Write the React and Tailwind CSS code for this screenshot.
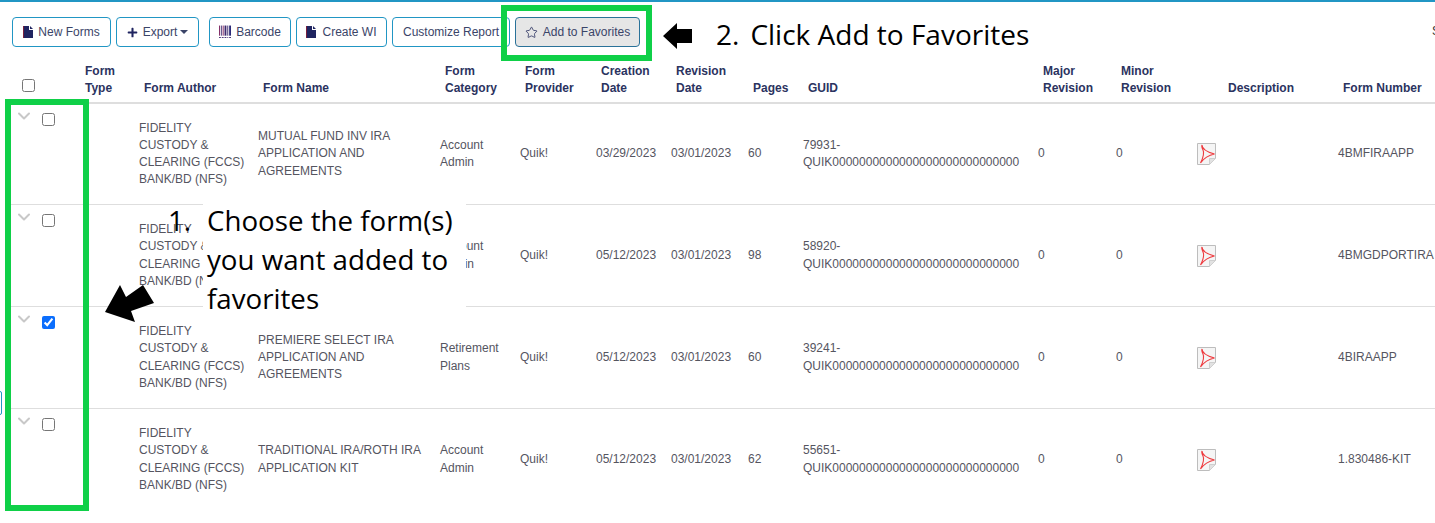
import React from "react";
import { FaPlus } from "react-icons/fa";
import { ChevronDown, Star } from "lucide-react";

const columns =
  "grid-cols-[67px_59px_119px_182px_80px_76px_75px_77px_55px_235px_79px_80px_141px_200px]";

const rows = [
  {
    name: ["MUTUAL FUND INV IRA", "APPLICATION AND", "AGREEMENTS"],
    category: ["Account", "Admin"],
    created: "03/29/2023",
    pages: "60",
    guid: "79931-",
    number: "4BMFIRAAPP",
  },
  {
    name: ["MUTUAL FUND GOLD", "PORTFOLIO IRA", "APPLICATION"],
    category: ["Account", "Admin"],
    created: "05/12/2023",
    pages: "98",
    guid: "58920-",
    number: "4BMGDPORTIRA",
  },
  {
    name: ["PREMIERE SELECT IRA", "APPLICATION AND", "AGREEMENTS"],
    category: ["Retirement", "Plans"],
    created: "05/12/2023",
    pages: "60",
    guid: "39241-",
    number: "4BIRAAPP",
    checked: true,
  },
  {
    name: ["TRADITIONAL IRA/ROTH IRA", "APPLICATION KIT"],
    category: ["Account", "Admin"],
    created: "05/12/2023",
    pages: "62",
    guid: "55651-",
    number: "1.830486-KIT",
  },
];

const FileIcon = () => (
  <svg viewBox="0 0 10 12" className="w-[10px] h-[12px] shrink-0">
    <path d="M0 0H6V4H10V12H0Z" fill="#1f2460" />
    <path d="M7 0L10 3H7Z" fill="#1f2460" />
    <rect x="0" y="0" width="1" height="12" fill="#7a1f3d" />
  </svg>
);

const BarcodeIcon = () => (
  <svg viewBox="0 0 13 14" className="w-[12px] h-[14px] shrink-0" fill="#3d2a6e">
    <rect x="0" y="0" width="1" height="11" fill="#7a1f5d" />
    <rect x="2" y="0" width="1" height="11" />
    <rect x="4" y="0" width="1" height="11" fill="#7a1f5d" />
    <rect x="6" y="0" width="2" height="11" />
    <rect x="9" y="0" width="1" height="11" />
    <rect x="11" y="0" width="2" height="11" fill="#2b2a78" />
    <rect x="0" y="12.500" width="2" height="1" />
    <rect x="3" y="12.500" width="2" height="1" />
    <rect x="6" y="12.500" width="2" height="1" />
    <rect x="9" y="12.500" width="1" height="1" />
    <rect x="11" y="12.500" width="2" height="1" />
  </svg>
);

const PdfIcon = () => (
  <svg viewBox="0 0 19 22" className="w-[19px] h-[22px]">
    <path d="M.5.5H18.5V15.5L12.5 21.500H.5Z" fill="#f5f5f5" stroke="#bdbdbd" />
    <path d="M18.5 15.500H12.5V21.500Z" fill="#e2e2e2" stroke="#cfcfcf" />
    <path
      d="M5 2C5 6 10 9 17.500 11C12 12 7 15 3.500 20C5.500 16 8 11 6 7C5 5 4.500 3 5 2Z"
      fill="none"
      stroke="#ee3a3e"
      strokeWidth="1.100"
    />
  </svg>
);

const Button = ({ children, active, className = "" }) => (
  <button
    className={`h-[30px] flex items-center justify-center gap-[5px] rounded border text-xs text-[#3a4468] ${
      active ? "bg-[#e6e6e6] border-[#2a7299]" : "bg-white border-[#2196c4]"
    } ${className}`}
  >
    {children}
  </button>
);

const Checkbox = ({ checked }) => (
  <input
    type="checkbox"
    readOnly
    checked={!!checked}
    className="w-[13px] h-[13px] m-0 accent-[#0b6efd]"
  />
);

const Row = ({ row, first, last }) => (
  <div
    className={`grid ${columns} items-center border-b ${first ? "h-[101px]" : "h-[102px]"} ${
      last ? "border-transparent" : "border-[#dedede]"
    }`}
  >
    <div className="self-start flex items-start gap-[8px] pl-[6px] pt-[2px]">
      <ChevronDown className="w-[20px] h-[20px] text-[#c8c8c8]" strokeWidth={2.4} />
      <div className="flex pt-[7px]">
        <Checkbox checked={row.checked} />
      </div>
    </div>
    <div />
    <div className="pl-[5px]">
      FIDELITY
      <br />
      CUSTODY &amp;
      <br />
      CLEARING (FCCS)
      <br />
      BANK/BD (NFS)
    </div>
    <div className="pl-[5px]">
      {row.name.map((line) => (
        <div key={line}>{line}</div>
      ))}
    </div>
    <div className="pl-[5px]">
      {row.category.map((line) => (
        <div key={line}>{line}</div>
      ))}
    </div>
    <div className="pl-[5px]">Quik!</div>
    <div className="pl-[5px]">{row.created}</div>
    <div className="pl-[5px]">03/01/2023</div>
    <div className="pl-[5px]">{row.pages}</div>
    <div className="pl-[5px]">
      {row.guid}
      <br />
      QUIK0000000000000000000000000000
    </div>
    <div className="pl-[5px]">0</div>
    <div className="pl-[4px]">0</div>
    <div className="pl-[5px] flex">
      <PdfIcon />
    </div>
    <div className="pl-[5px] whitespace-nowrap">{row.number}</div>
  </div>
);

const Header = () => (
  <div
    className={`grid ${columns} h-[57px] border-b-2 border-[#dedede] items-end pb-[5px] font-bold text-[#2b3360]`}
  >
    <div className="pl-[14px] pb-[5px] flex">
      <Checkbox />
    </div>
    <div className="pl-[10px]">
      Form
      <br />
      Type
    </div>
    <div className="pl-[10px]">Form Author</div>
    <div className="pl-[10px]">Form Name</div>
    <div className="pl-[10px]">
      Form
      <br />
      Category
    </div>
    <div className="pl-[10px]">
      Form
      <br />
      Provider
    </div>
    <div className="pl-[10px]">
      Creation
      <br />
      Date
    </div>
    <div className="pl-[10px]">
      Revision
      <br />
      Date
    </div>
    <div className="pl-[10px]">Pages</div>
    <div className="pl-[10px]">GUID</div>
    <div className="pl-[10px]">
      Major
      <br />
      Revision
    </div>
    <div className="pl-[9px]">
      Minor
      <br />
      Revision
    </div>
    <div className="pl-[36px]">Description</div>
    <div className="pl-[10px] whitespace-nowrap">Form Number</div>
  </div>
);

export default function App() {
  return (
    <div className="relative w-[1435px] h-[523px] overflow-hidden bg-white font-['Liberation_Sans',Arial,sans-serif] text-xs leading-[17.14px] text-[#55555f]">
      <div className="h-[2px] bg-[#2196c4]" />

      <div className="flex items-start pl-[12px] pt-[15px] h-[45px]">
        <Button className="w-[99px]">
          <FileIcon />
          New Forms
        </Button>
        <Button className="w-[83px] ml-[5px]">
          <FaPlus className="w-[11px] h-[11px] text-[#1f2460]" />
          Export
          <span className="-ml-[2px] border-x-[4px] border-x-transparent border-t-[4px] border-t-[#3a4468]" />
        </Button>
        <Button className="w-[82px] ml-[10px] gap-[4px]">
          <BarcodeIcon />
          Barcode
        </Button>
        <Button className="w-[91px] ml-[5px] gap-[6px]">
          <FileIcon />
          Create WI
        </Button>
        <Button className="w-[118px] ml-[5px]">Customize Report</Button>
        <Button active className="w-[125px] ml-[5px] gap-[2px]">
          <Star className="w-[13px] h-[13px] text-[#2b3360]" strokeWidth={1.5} />
          Add to Favorites
        </Button>
      </div>

      <div className="ml-[8px] w-[1500px]">
        <Header />
        {rows.map((row, i) => (
          <Row key={row.guid} row={row} first={i === 0} last={i === rows.length - 1} />
        ))}
      </div>

      {/* annotations over the screenshot */}
      <div className="absolute left-[5px] top-[99px] w-[84px] h-[412px] border-[6px] border-[#0fd048]" />
      <div className="absolute left-[501px] top-[5px] w-[151px] h-[56px] border-[6px] border-[#0fd048]" />

      <svg viewBox="0 0 29 26" className="absolute left-[663px] top-[23px] w-[29px] h-[26px]">
        <path d="M0 13L14 0V6H29V20H14V26Z" fill="#000" />
      </svg>
      <div className="absolute left-[716px] top-[15px] flex gap-[11px] font-['Open_Sans',sans-serif] text-[28px] leading-[38px] text-black whitespace-nowrap">
        <span>2.</span>
        <span>Click Add to Favorites</span>
      </div>

      <div className="absolute left-[168px] top-[201px] font-['Open_Sans',sans-serif] text-[27.7px] leading-[39px] text-black">
        1.
      </div>
      <div className="absolute left-[203px] top-[201px] w-[263px] h-[109px] pl-[4px] bg-white font-['Open_Sans',sans-serif] text-[27.7px] leading-[39px] text-black whitespace-nowrap">
        Choose the form(s)
        <br />
        you want added to
        <br />
        favorites
      </div>
      <svg viewBox="0 0 50 38" className="absolute left-[105px] top-[285px] w-[50px] h-[38px]">
        <path d="M0 27L15 0L21 12L38 0L49 18L26 26L30 37Z" fill="#000" />
      </svg>

      <div className="absolute -left-[2px] top-[391px] w-[4px] h-[24px] border border-[#2196c4] rounded-sm" />
      <div className="absolute left-[1432px] top-[23px] text-[#333]">S</div>
    </div>
  );
}
